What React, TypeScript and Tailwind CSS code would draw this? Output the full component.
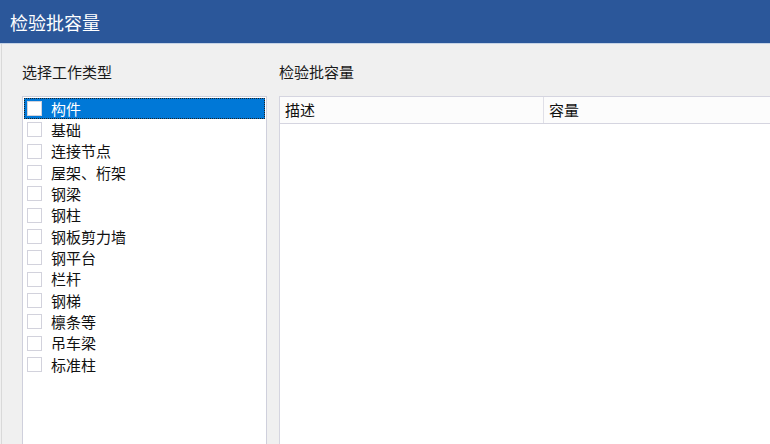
const types = [
  '构件',
  '基础',
  '连接节点',
  '屋架、桁架',
  '钢梁',
  '钢柱',
  '钢板剪力墙',
  '钢平台',
  '栏杆',
  '钢梯',
  '檩条等',
  '吊车梁',
  '标准柱',
];

const font = { fontFamily: '"Microsoft YaHei", "Noto Sans CJK SC", "Noto Sans", sans-serif' };

const App = () => {
  const selected = 0;

  return (
    <div className="w-[770px] h-[444px] overflow-hidden bg-[#f0f0f0] flex flex-col" style={font}>
      {/* Title bar */}
      <div className="h-[43px] shrink-0 bg-[#2b579a] px-[10px] flex items-center text-white text-[18px] leading-[24px]">
        检验批容量
      </div>
      <div className="h-px shrink-0 bg-[#c5d3e6]" />

      {/* Body */}
      <div className="flex-1 flex pl-[20px] pt-[18px] border-l border-[#d9d9d9] ml-px">
        {/* Work type list */}
        <div className="w-[245px] shrink-0 flex flex-col">
          <div className="text-[15px] leading-[20px] text-[#1a1a1a] h-[20px]">选择工作类型</div>
          <div className="mt-[14px] h-[380px] shrink-0 bg-white border border-[#cfd0dc] p-px">
            {types.map((t, i) => (
              <div
                key={t}
                className={`h-[21.33px] flex items-center pl-[3px] text-[15px] leading-[20px] ${
                  i === selected
                    ? 'bg-[#0078d7] text-white outline-1 outline-dotted outline-[#222] -outline-offset-1'
                    : 'text-[#111]'
                }`}
              >
                <span className="w-[15px] h-[15px] bg-white border border-[#d2d2dc] shrink-0" />
                <span className="ml-[9px]">{t}</span>
              </div>
            ))}
          </div>
        </div>

        {/* Capacity table */}
        <div className="ml-[12px] w-[520px] shrink-0 flex flex-col">
          <div className="text-[15px] leading-[20px] text-[#1a1a1a] h-[20px]">检验批容量</div>
          <div className="mt-[14px] h-[380px] shrink-0 bg-white border border-[#d5d5e0] border-r-0">
            <div className="h-[27px] flex bg-[#fcfcfc] border-b border-[#d5d5e0] text-[15px] leading-[20px] text-[#111]">
              <div className="w-[264px] shrink-0 border-r border-[#e0e0e8] pl-[5px] flex items-center">描述</div>
              <div className="flex-1 pl-[5px] flex items-center">容量</div>
            </div>
          </div>
        </div>
      </div>
    </div>
  );
};

export default App;
